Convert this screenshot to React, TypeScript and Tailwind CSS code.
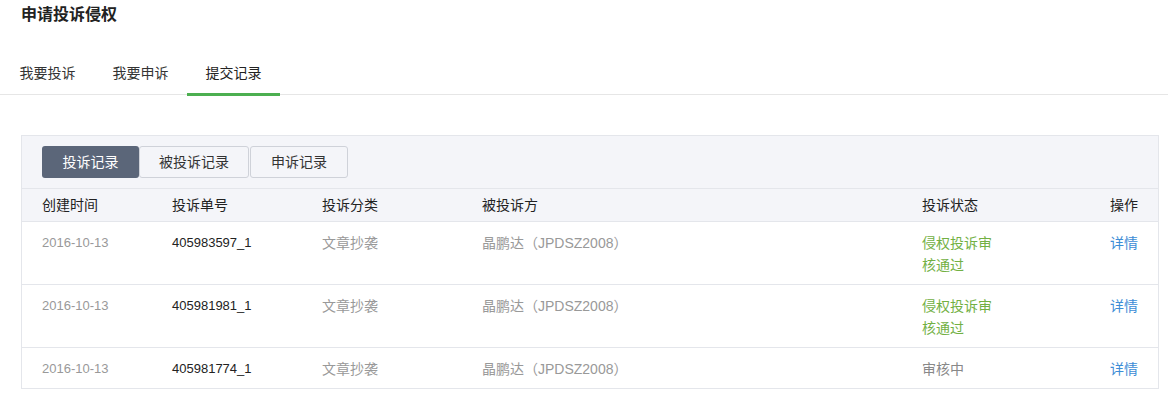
import React from 'react';

const font = { fontFamily: '"Liberation Sans", "Noto Sans CJK SC", sans-serif' };

interface Row {
  date: string;
  no: string;
  kind: string;
  party: string;
  status: string;
  passed: boolean;
}

const rows: Row[] = [
  { date: '2016-10-13', no: '405983597_1', kind: '文章抄袭', party: '晶鹏达（JPDSZ2008）', status: '侵权投诉审核通过', passed: true },
  { date: '2016-10-13', no: '405981981_1', kind: '文章抄袭', party: '晶鹏达（JPDSZ2008）', status: '侵权投诉审核通过', passed: true },
  { date: '2016-10-13', no: '405981774_1', kind: '文章抄袭', party: '晶鹏达（JPDSZ2008）', status: '审核中', passed: false },
];

const cols = 'grid grid-cols-[130px_150px_160px_440px_188px_1fr] pl-[20px] pr-[20px]';

export default function App() {
  const tabs = ['我要投诉', '我要申诉', '提交记录'];
  const subTabs = ['投诉记录', '被投诉记录', '申诉记录'];

  return (
    <div className="w-[1168px] h-[402px] bg-white text-[14px] text-[#333]" style={font}>
      <h1 className="pl-[21px] h-[30px] leading-[30px] text-[16px] font-bold text-[#222]">申请投诉侵权</h1>

      {/* top tabs */}
      <div className="mt-[21px] flex pl-[1px] border-b border-[#e6e6e6]">
        {tabs.map((t, i) => (
          <div
            key={t}
            className={
              'relative w-[93px] h-[43px] leading-[45px] text-center ' +
              (i === 2 ? 'text-[#222]' : 'text-[#333]')
            }
          >
            {t}
            {i === 2 && <span className="absolute left-0 right-0 bottom-[-2px] h-[3px] bg-[#4caf50]" />}
          </div>
        ))}
      </div>

      {/* records panel */}
      <div className="mt-[40px] ml-[21px] w-[1138px] border border-[#e4e6eb]">
        <div className="bg-[#f4f5f9] px-[20px] py-[10px] flex border-b border-[#e4e6eb]">
          {subTabs.map((t, i) => (
            <button
              key={t}
              className={
                'h-[32px] rounded-[3px] text-[14px] ' +
                (i === 0
                  ? 'w-[97px] bg-[#5b6679] text-white'
                  : i === 1
                  ? 'w-[110px] border border-[#cfd2d9] text-[#333]'
                  : 'w-[98px] ml-[1px] border border-[#cfd2d9] text-[#333]')
              }
            >
              {t}
            </button>
          ))}
        </div>

        <div className={cols + ' bg-[#f4f5f9] h-[32px] items-center text-[#222]'}>
          <div>创建时间</div>
          <div>投诉单号</div>
          <div>投诉分类</div>
          <div>被投诉方</div>
          <div>投诉状态</div>
          <div>操作</div>
        </div>

        {rows.map((r) => (
          <div key={r.no} className={cols + ' border-t border-[#e4e6eb] pt-[10px] pb-[8px] leading-[22px]'}>
            <div className="text-[#999] text-[13px]">{r.date}</div>
            <div className="text-[#222] text-[13px]">{r.no}</div>
            <div className="text-[#999]">{r.kind}</div>
            <div className="text-[#999]">{r.party}</div>
            <div className={'w-[72px] ' + (r.passed ? 'text-[#72b043]' : 'text-[#888]')}>{r.status}</div>
            <div className="text-[#3c8dd6]">详情</div>
          </div>
        ))}
      </div>
    </div>
  );
}
